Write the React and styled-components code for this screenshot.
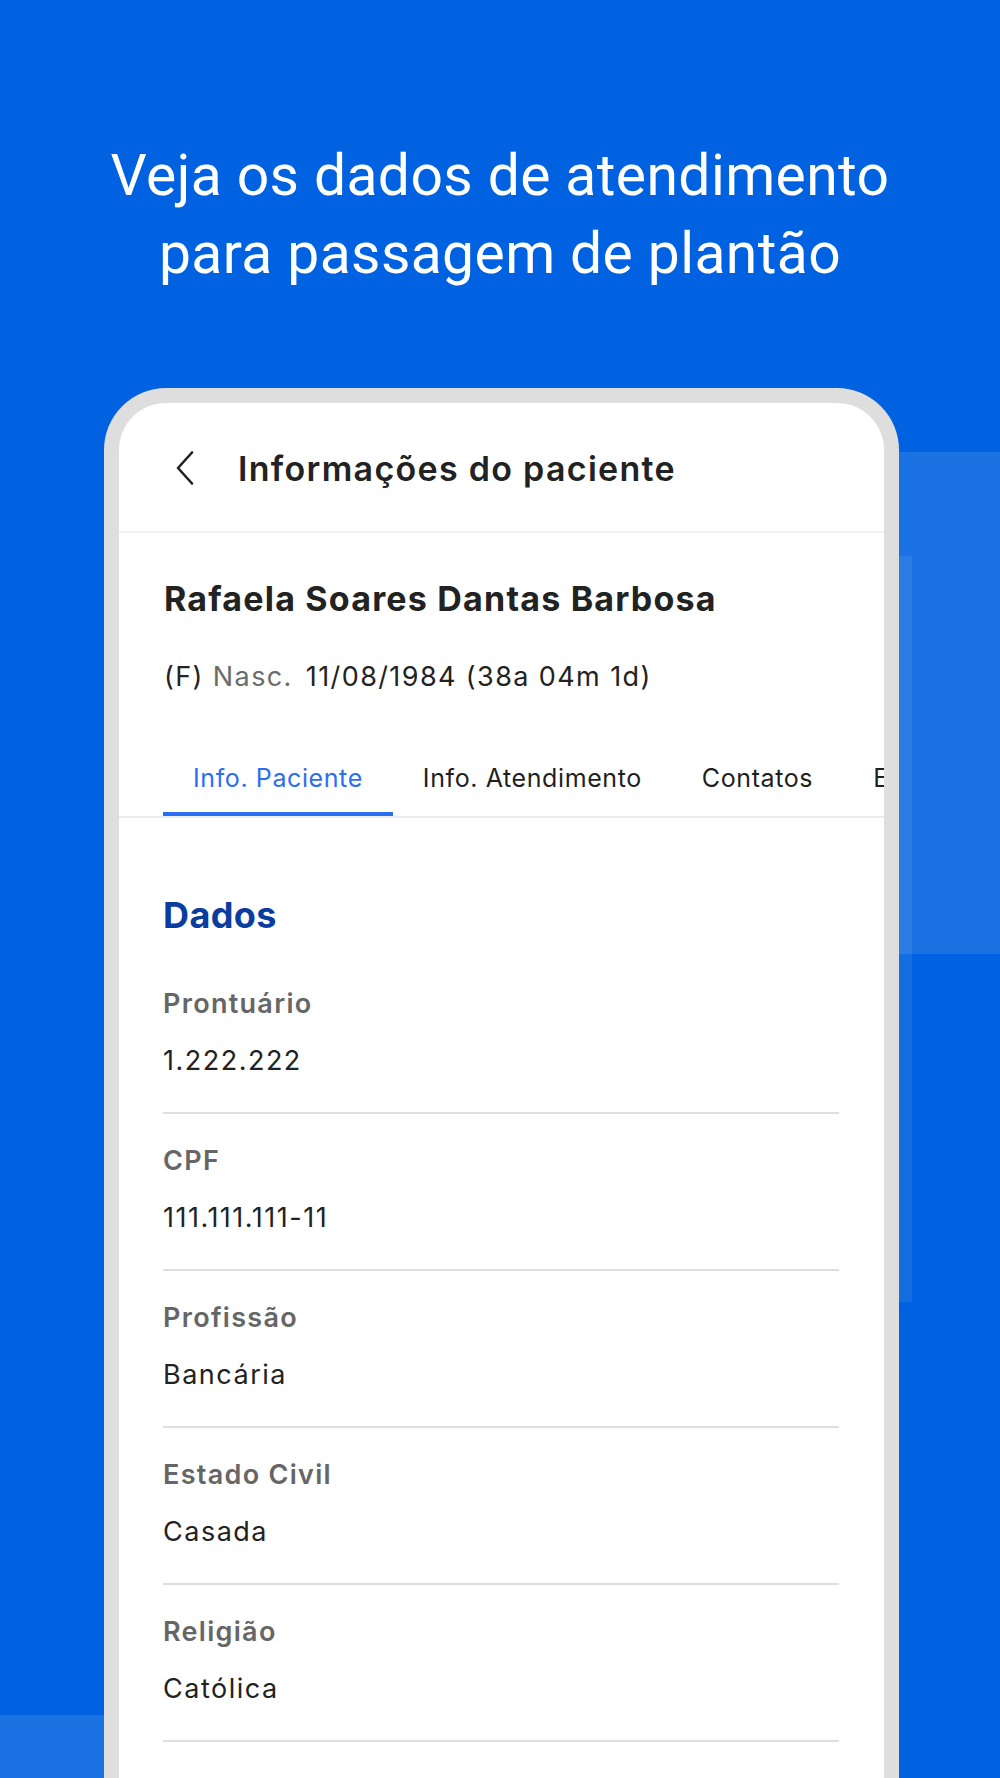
import React, { useState } from "react";
import styled, { createGlobalStyle } from "styled-components";

const GlobalStyle = createGlobalStyle`
	* {
		box-sizing: border-box;
	}
	body {
		margin: 0;
		background: #0062e0;
		font-family: Inter, "Noto Sans", sans-serif;
		-webkit-font-smoothing: antialiased;
	}
`;

const Page = styled.div`
	position: relative;
	width: 1000px;
	height: 1778px;
	overflow: hidden;
	background: #0062e0;
`;

// translucent blocks drawn behind the phone
const Glow = styled.div`
	position: absolute;
	background: rgba(255, 255, 255, ${(p) => p.alpha});
`;

const Headline = styled.h1`
	position: relative;
	margin: 0;
	padding-top: 137px;
	text-align: center;
	color: #ffffff;
	font-family: Roboto, "Noto Sans", sans-serif;
	font-weight: 400;
	font-size: 57px;
	line-height: 78px;
	letter-spacing: 0.4px;
`;

const Phone = styled.div`
	position: relative;
	margin: 95px 0 0 104px;
	width: 795px;
	height: 1400px;
	border: 15px solid #dedede;
	border-bottom: none;
	border-radius: 62px 62px 0 0;
	background: #ffffff;
	overflow: hidden;
`;

const Header = styled.div`
	display: flex;
	align-items: center;
	height: 130px;
	padding: 2px 0 0 54px;
	border-bottom: 2px solid #f2f2f2;
`;

const BackButton = styled.button`
	display: flex;
	align-items: center;
	justify-content: center;
	width: 24px;
	height: 36px;
	padding: 0;
	margin-right: 41px;
	border: none;
	background: none;
	cursor: pointer;
`;

const Title = styled.h2`
	margin: 0;
	font-size: 34px;
	font-weight: 600;
	color: #222222;
	letter-spacing: 1.3px;
`;

const Patient = styled.div`
	padding: 46px 0 0 45px;
`;

const Name = styled.div`
	font-size: 34px;
	line-height: 40px;
	font-weight: 700;
	color: #222222;
	letter-spacing: 1.2px;
`;

const Birth = styled.div`
	margin-top: 40px;
	font-size: 27px;
	line-height: 36px;
	color: #222222;
	letter-spacing: 1.4px;
`;

const Muted = styled.span`
	color: #6b6b6b;
	margin-right: 13px;
`;

const TabList = styled.div`
	display: flex;
	margin-top: 68px;
	padding-left: 44px;
	border-bottom: 2px solid #ececec;
	white-space: nowrap;
`;

const Tab = styled.button`
	flex: none;
	padding: 0 30px 19px;
	border: none;
	border-bottom: 4px solid ${(p) => (p.active ? "#2b6ef2" : "transparent")};
	background: none;
	font-family: inherit;
	font-size: 25px;
	line-height: 30px;
	font-weight: 400;
	color: ${(p) => (p.active ? "#2b6ef2" : "#1f1f1f")};
	letter-spacing: 0.6px;
	cursor: pointer;
`;

const Content = styled.div`
	padding: 75px 45px 0 44px;
`;

const SectionTitle = styled.h3`
	margin: 0 0 20px;
	font-size: 36px;
	line-height: 44px;
	font-weight: 700;
	color: #0a3d9f;
	letter-spacing: 0.4px;
`;

const Field = styled.div`
	display: flex;
	flex-direction: column;
	gap: 25px;
	padding: 31px 0 35px;
	border-bottom: 2px solid #dedede;
`;

const Label = styled.div`
	font-size: 27px;
	line-height: 32px;
	font-weight: 600;
	color: #666666;
	letter-spacing: 1.3px;
`;

const Value = styled.div`
	font-size: 27px;
	line-height: 32px;
	color: #222222;
	letter-spacing: 1.5px;
`;

const tabs = ["Info. Paciente", "Info. Atendimento", "Contatos", "Endereço"];

const fields = [
	{ label: "Prontuário", value: "1.222.222" },
	{ label: "CPF", value: "111.111.111-11" },
	{ label: "Profissão", value: "Bancária" },
	{ label: "Estado Civil", value: "Casada" },
	{ label: "Religião", value: "Católica" },
];

const App = () => {
	const [activeTab, setActiveTab] = useState(0);

	return (
		<Page>
			<GlobalStyle />
			<Glow alpha={0.1} style={{ left: 700, top: 452, width: 300, height: 502 }} />
			<Glow alpha={0.08} style={{ left: 600, top: 556, width: 312, height: 746 }} />
			<Glow alpha={0.1} style={{ left: 0, top: 1715, width: 300, height: 63 }} />

			<Headline>
				Veja os dados de atendimento
				<br />
				para passagem de plantão
			</Headline>

			<Phone>
				<Header>
					<BackButton aria-label="Voltar">
						<svg width="20" height="34" viewBox="0 0 20 34" fill="none">
							<path
								d="M17 1.5 L3 17 L17 32.5"
								stroke="#222"
								strokeWidth="2.6"
								strokeLinecap="round"
								strokeLinejoin="round"
							/>
						</svg>
					</BackButton>
					<Title>Informações do paciente</Title>
				</Header>

				<Patient>
					<Name>Rafaela Soares Dantas Barbosa</Name>
					<Birth>
						(F) <Muted>Nasc.</Muted>11/08/1984 (38a 04m 1d)
					</Birth>
				</Patient>

				<TabList>
					{tabs.map((tab, i) => (
						<Tab key={tab} active={i === activeTab} onClick={() => setActiveTab(i)}>
							{tab}
						</Tab>
					))}
				</TabList>

				<Content>
					<SectionTitle>Dados</SectionTitle>
					{fields.map((f) => (
						<Field key={f.label}>
							<Label>{f.label}</Label>
							<Value>{f.value}</Value>
						</Field>
					))}
				</Content>
			</Phone>
		</Page>
	);
};

export default App;
